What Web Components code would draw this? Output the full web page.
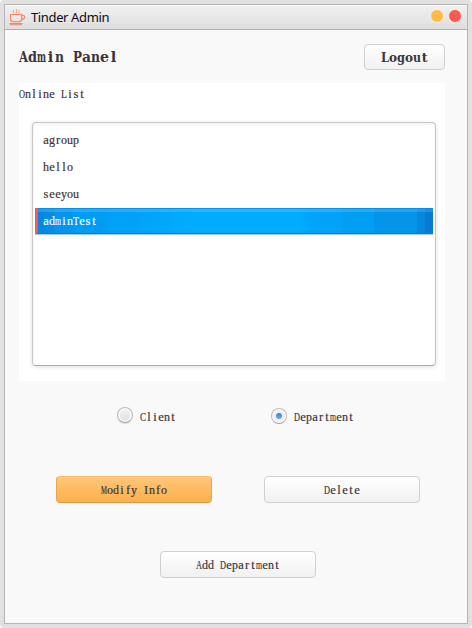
<!DOCTYPE html>
<html lang="en"><head><meta charset="utf-8"><title>Tinder Admin</title>
<style>html,body{margin:0;height:100%;background:#fff;overflow:hidden}</style></head>
<body>
<admin-window>
  <title-bar slot="bar" label="Tinder Admin"></title-bar>
  <panel-head slot="head"></panel-head>
  <online-panel slot="list">
    <list-row label="agroup"></list-row>
    <list-row label="hello"></list-row>
    <list-row label="seeyou"></list-row>
    <list-row label="adminTest" selected></list-row>
  </online-panel>
  <radio-option slot="radio" label="Client"></radio-option>
  <radio-option slot="radio" label="Department" checked></radio-option>
  <push-button slot="actions" label="Modify Info" primary></push-button>
  <push-button slot="actions" label="Delete"></push-button>
  <push-button slot="add" label="Add Department"></push-button>
</admin-window>
<script>
const define=(name,render)=>customElements.define(name,class extends HTMLElement{
  connectedCallback(){ if(!this.shadowRoot) this.attachShadow({mode:'open'}).innerHTML=render(this); }
});
const pen=document.createElement('canvas').getContext('2d');

// Fixed-pitch serif lettering: narrow glyphs are centred in their cell, wide ones are condensed to fit it.
define('cell-text',el=>{
  const t=el.getAttribute('text'),p=+(el.getAttribute('pitch')||6),s=+(el.getAttribute('size')||12.5),bold=el.hasAttribute('bold');
  const face=bold?'"DejaVu Serif",serif':'"Liberation Serif","Times New Roman",serif',weight=bold?700:400;
  const h=Math.ceil(bold?s*1.1:s);
  pen.font=`${weight} ${s}px ${face}`;
  const glyphs=[...t].map(c=>{
    const w=pen.measureText(c).width;
    return w>p?`<b style="margin-right:${(p-w).toFixed(3)}px;transform:scaleX(${(p/w).toFixed(3)})">${c}</b>`
              :`<i style="padding:0 ${((p-w)/2).toFixed(3)}px">${c}</i>`;
  }).join('');
  return `<style>:host{display:block;flex:none;width:${t.length*p}px;height:${h}px}
  .line{display:block;font:${weight} ${s}px/${h}px ${face};white-space:pre;font-kerning:none;font-variant-ligatures:none;-webkit-text-stroke:${bold?0:.2}px currentColor}
  i,b{font:inherit}
  b{display:inline-block;transform-origin:0 50%}</style><span class="line">${glyphs}</span>`;
});

define('admin-window',()=>`<style>
:host{display:block;box-sizing:border-box;width:472px;height:628px;padding:4px;background:#e1e1e1;border-radius:4px;color:#3b3539}
.frame{box-sizing:border-box;height:620px;border:1px solid #b5b5b5;background:#f9f9f9;display:flex;flex-direction:column}
.body{padding:14px 22px 0 14px}
.radios{display:grid;grid-template-columns:154px auto;justify-content:start;padding:26px 0 0 98px}
.actions{display:flex;gap:52px;padding:51px 0 0 37px}
.add{padding:48px 0 0 141px}
</style><div class="frame"><slot name="bar"></slot><div class="body"><slot name="head"></slot><slot name="list"></slot>
<div class="radios"><slot name="radio"></slot></div><div class="actions"><slot name="actions"></slot></div><div class="add"><slot name="add"></slot></div></div></div>`);

define('title-bar',el=>`<style>
:host{display:flex;align-items:center;box-sizing:border-box;height:25px;flex:none;padding:0 5px 0 4px;background:linear-gradient(#f1f1f1,#dedede);border-bottom:1px solid #b0b0b0;box-shadow:inset 0 1px #f8f8f8}
.name{font:13px/24px "Noto Sans","Open Sans",sans-serif;color:#120b14;margin-left:5px;flex:1;letter-spacing:-.37px}
.dots{display:flex;gap:4px;margin-top:-2px}
i{box-sizing:border-box;width:14px;height:14px;border-radius:50%;border:1px solid #f7f3ec;background:#ffbb44}
i+i{background:#ff5752}
</style>
<svg width="17" height="18" viewBox="0 0 17 18" fill="none" stroke="#fa8264" stroke-width="1.1"><path d="M1.5 6.5h11.2v4.2q0 3-3 3H4.5q-3 0-3-3zM12.7 7.5h1.5q1.5 0 1.5 1.4 0 2.2-3.2 2.6M.5 15.5h13M1 15.5q.2 1.2 1.6 1.2h8.8q1.4 0 1.6-1.2"/><path d="M4.5 2v3M7.5 1v4M10 2v3" stroke="#fba58f"/></svg>
<span class="name">${el.getAttribute('label')}</span><div class="dots"><i></i><i></i></div>`);

define('panel-head',()=>`<style>
:host{display:flex;justify-content:space-between;align-items:flex-start;height:39px}
.t{padding-top:5px}
push-button{--w:81px;--h:26px}
</style><div class="t"><cell-text text="Admin Panel" pitch="9" size="14.5" bold></cell-text></div><push-button label="Logout" large></push-button>`);

define('push-button',el=>`<style>
:host{display:flex;align-items:center;justify-content:center;box-sizing:border-box;width:var(--w,156px);height:var(--h,27px);padding-top:2px;border:1px solid #d0d0d0;border-radius:4px;background:linear-gradient(#fff,#f1f1f1)}
:host([primary]){background:linear-gradient(#fec67a,#fbb04d);border-color:#fbb966 #eba550 #dd994a #eba550;box-shadow:inset 0 1px #fdcf8f}
</style><cell-text text="${el.getAttribute('label')}" ${el.hasAttribute('large')?'pitch="8" size="12.5" bold':''}></cell-text>`);

define('online-panel',()=>`<style>
:host{display:block;box-sizing:border-box;width:426px;height:298px;background:#fff;padding:5px 9px 0 13px}
.h{margin-left:-13px}
.box{box-sizing:border-box;width:404px;height:244px;margin-top:21px;padding:3px 2px;border:1px solid #c6c6c6;border-bottom-color:#aaa;border-radius:4px;box-shadow:0 1px 4px #0002,inset 0 2px 3px #0000000c}
</style><div class="h"><cell-text text="Online List"></cell-text></div><div class="box"><slot></slot></div>`);

define('list-row',el=>`<style>
:host{display:flex;align-items:center;box-sizing:border-box;height:27px;padding:1px 0 0 8px}
:host([selected]){height:26px;margin-top:1px;padding:1px 0 0 5px;color:#f4fbff;border-left:3px solid #f95659;border-bottom:1px solid #087fd2;
background:linear-gradient(#ffffff24 0 4px,transparent 4px),linear-gradient(90deg,#0788e0 0 1.5%,#078ce4 1.5% 4%,#0695ec 4% 9%,#009cf4 9% 16%,#00a2f9 20% 25%,#00acff 38%,#00acff 66%,#00a3f9 70% 77%,#009ff4 77% 85%,#0395ea 85% 96%,#0788df 96% 98%,#067bd1 98%);box-shadow:inset 0 1px #0790e5,0 1px #a9cce4}
</style><cell-text text="${el.getAttribute('label')}"></cell-text>`);

define('radio-option',el=>`<style>
:host{display:flex;align-items:flex-start;height:18px;gap:7px}
.r{display:flex;align-items:center;justify-content:center;box-sizing:border-box;width:16px;height:16px;border-radius:50%;border:1px solid #bcbcbc;border-bottom-color:#a5a5a5;background:linear-gradient(#f2f2f2,#dfdfdf);box-shadow:inset 0 0 0 1.5px #fafafa,0 1px 1px #0002}
:host([checked]) .r{background:#f0f0f0;margin-top:1px;box-shadow:inset 0 0 0 1px #fff}
:host([checked]) .r::after{content:"";width:6px;height:6px;border-radius:50%;background:linear-gradient(#3f82cc,#69ade9)}
.c{padding-top:4px}
</style><span class="r"></span><div class="c"><cell-text text="${el.getAttribute('label')}"></cell-text></div>`);
</script>
</body></html>
